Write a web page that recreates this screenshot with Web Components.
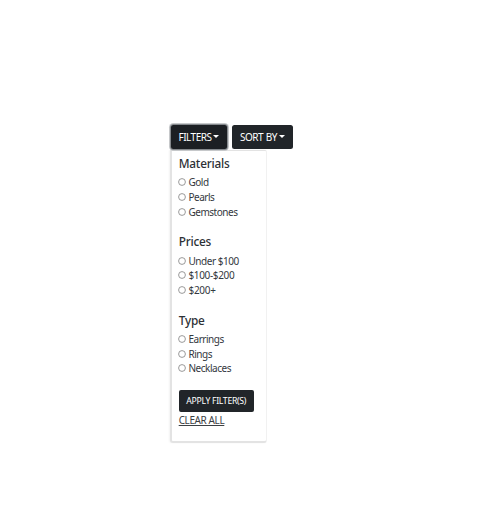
<!DOCTYPE html>
<html lang="en"><head><meta charset="utf-8"><title>Filters</title>
<style>body{margin:0;background:#fff;font-family:"Noto Sans","Open Sans",sans-serif;color:#212529}</style></head>
<body>
<filter-page></filter-page>
<script>
const define=(name,html)=>customElements.define(name,class extends HTMLElement{
  constructor(){super();this.attachShadow({mode:'open'}).innerHTML=html;}
});
define('drop-button',`<style>
:host{display:flex;align-items:center;box-sizing:border-box;height:24px;border-radius:2.5px;background:#212529;color:#fff;font-size:10px;line-height:14px;padding:0 0 1px 8px;white-space:nowrap;letter-spacing:-.5px;word-spacing:.6px}
:host([open]){background:#1c1f23;padding-left:7.5px;box-shadow:0 0 0 1px #85898d,0 0 0 2px #c6c8ca}
svg{width:6px;height:3px;margin-left:2px;flex:none}
</style><slot></slot><svg viewBox="0 0 6 3"><path d="M0 0H6L3 3Z" fill="#fff"/></svg>`);
define('radio-option',`<style>
:host{display:flex;align-items:center;height:14.7px;font-size:10px;line-height:14.7px;letter-spacing:var(--ls,-.48px);white-space:nowrap;color:#34383e}
svg{width:8px;height:8px;margin:-1px 2.3px 0 -.5px;flex:none}
</style><svg viewBox="0 0 8 8"><circle cx="4" cy="4" r="3.4" fill="#fff" stroke="#8d8d8d" stroke-width=".9"/></svg><slot></slot>`);
define('option-group',`<style>
:host{display:block;height:78.3px}
h5{margin:0 0 3.8px;font-size:11.8px;line-height:15.5px;font-weight:500;letter-spacing:-.2px;color:#2c3035}
</style><h5><slot name="title"></slot></h5><slot></slot>`);
define('filter-menu',`<style>
:host{display:block;box-sizing:border-box;width:97px;height:293px;padding:5.2px 0 0 6.7px;border:1px solid #e3e3e3;border-right-color:#f1f1f1;border-width:1px 1px 2px 2px;border-radius:0 2px 3px 3px;background:#fff;box-shadow:-1px 0 2px #f3f3f3}
button{display:block;margin:0;border:0;width:75px;height:22px;padding:0;background:#212529;color:#fff;border-radius:2px;font:8.7px/22px "Noto Sans",sans-serif;letter-spacing:-.31px;white-space:nowrap}
a{display:block;margin-top:.8px;width:max-content;font-size:10px;line-height:14.7px;letter-spacing:-.4px;text-decoration:underline;color:#3c4044}
.g{height:233.8px}
</style><div class="g"><slot></slot></div><button>APPLY FILTER(S)</button><a>CLEAR ALL</a>`);
define('filter-page',`<style>
:host{display:block;box-sizing:border-box;height:510px;padding:125px 0 0 171px}
.bar{display:flex;gap:5px}
drop-button:first-child{width:56px}drop-button:last-child{width:61px}
filter-menu{margin:1px 0 0 -1px}
</style><div class="bar"><drop-button open>FILTERS</drop-button><drop-button>SORT BY</drop-button></div>
<filter-menu>
<option-group><span slot="title">Materials</span><radio-option>Gold</radio-option><radio-option>Pearls</radio-option><radio-option>Gemstones</radio-option></option-group>
<option-group><span slot="title">Prices</span><radio-option style="--ls:-.45px">Under $100</radio-option><radio-option style="--ls:-.35px">$100-$200</radio-option><radio-option style="--ls:-.3px">$200+</radio-option></option-group>
<option-group><span slot="title">Type</span><radio-option>Earrings</radio-option><radio-option>Rings</radio-option><radio-option>Necklaces</radio-option></option-group>
</filter-menu>`);
</script></body></html>
